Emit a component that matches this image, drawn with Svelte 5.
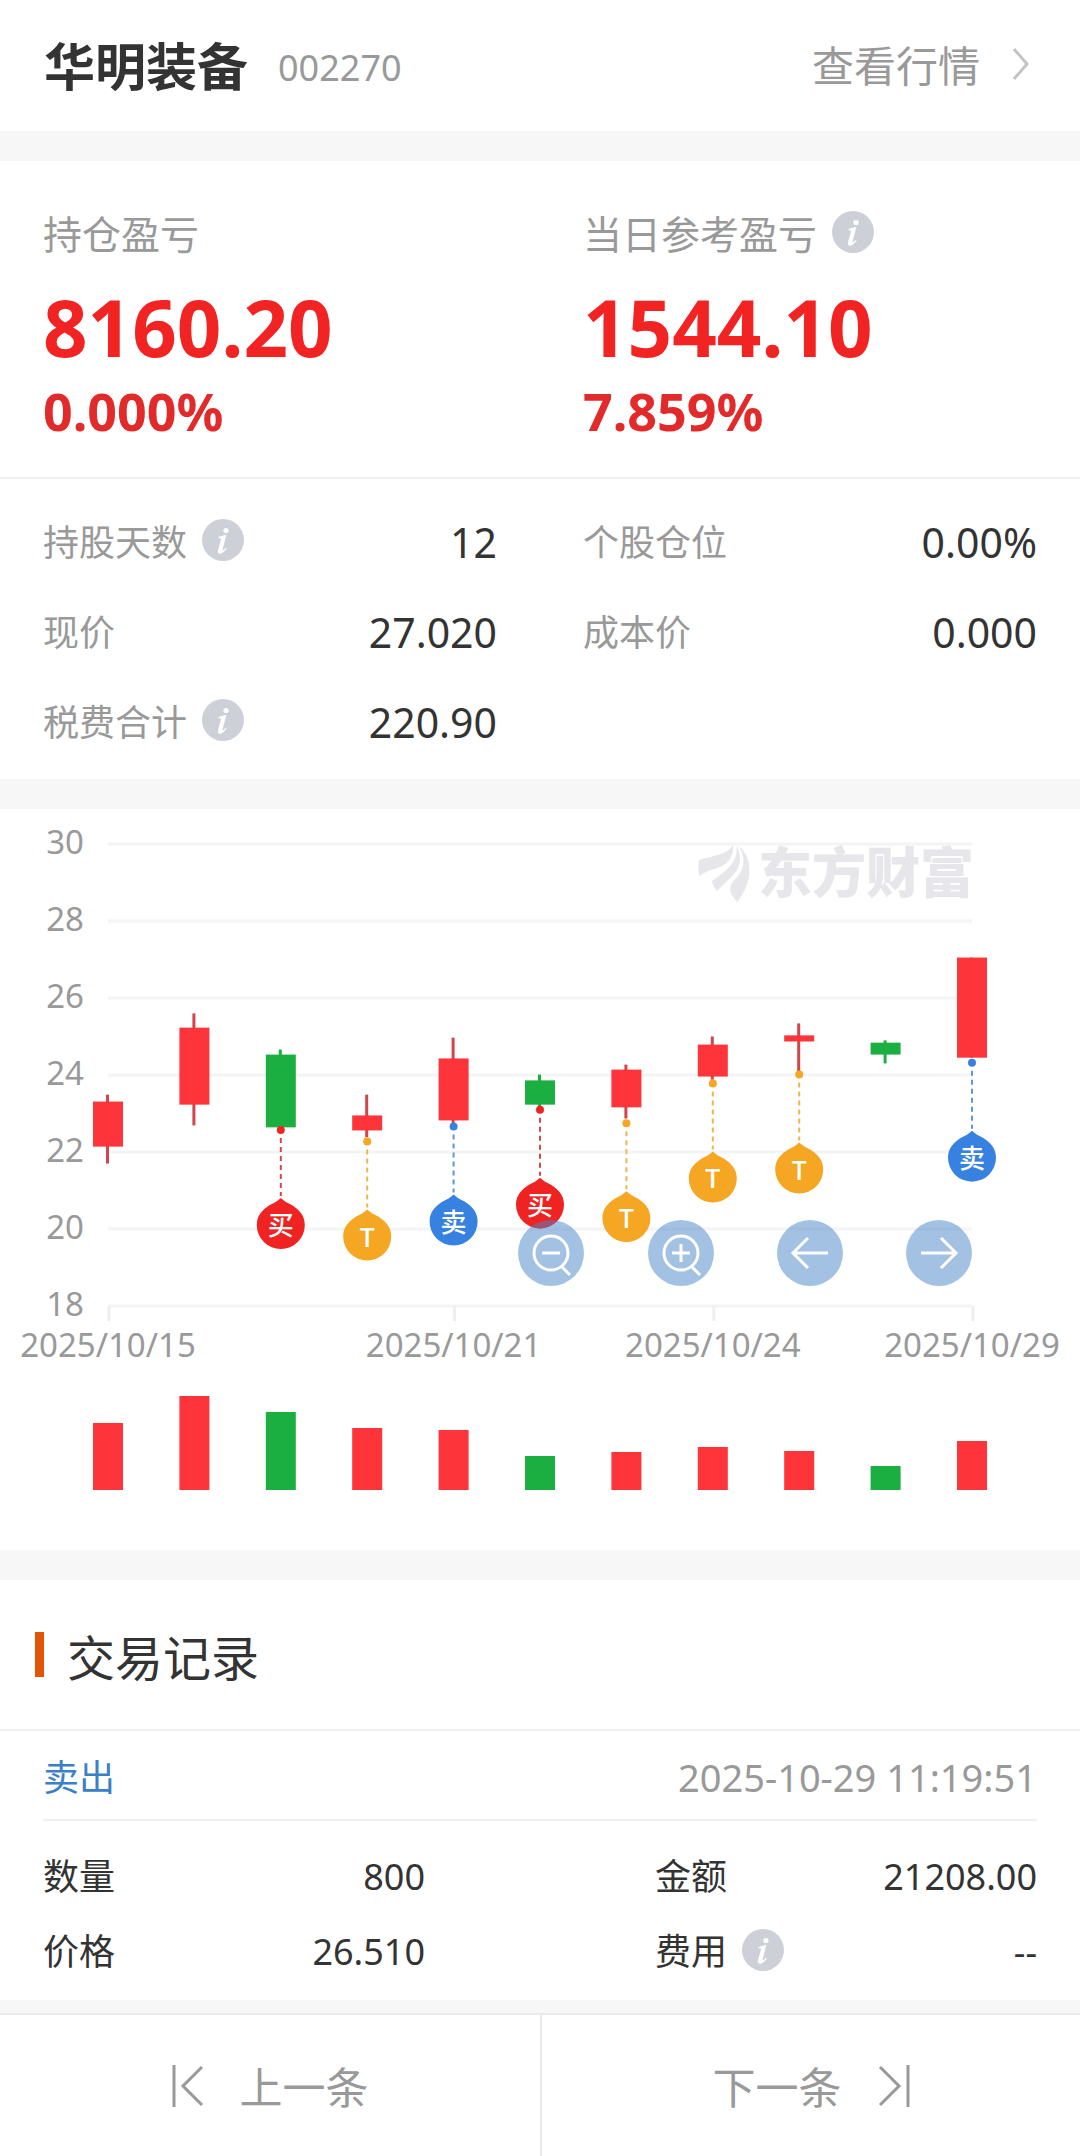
<script>
	const stock = { name: '华明装备', code: '002270' };

	const profits = [
		{ label: '持仓盈亏', amount: '8160.20', percent: '0.000%' },
		{ label: '当日参考盈亏', amount: '1544.10', percent: '7.859%', info: true }
	];

	const details = [
		{ label: '持股天数', value: '12', info: true },
		{ label: '个股仓位', value: '0.00%' },
		{ label: '现价', value: '27.020' },
		{ label: '成本价', value: '0.000' },
		{ label: '税费合计', value: '220.90', info: true }
	];

	const record = [
		{ label: '数量', value: '800' },
		{ label: '金额', value: '21208.00' },
		{ label: '价格', value: '26.510' },
		{ label: '费用', value: '--', info: true }
	];

	// top / bottom are the candle body, high / low the wick
	const candles = [
		{ up: true, top: 23.31, bottom: 22.14, high: 23.49, low: 21.7, volume: 67, date: '2025/10/15' },
		{ up: true, top: 25.23, bottom: 23.23, high: 25.6, low: 22.69, volume: 94 },
		{ up: false, top: 24.53, bottom: 22.64, high: 24.66, low: 22.64, volume: 78, mark: 'buy', at: 22.57 },
		{ up: true, top: 22.95, bottom: 22.56, high: 23.49, low: 22.38, volume: 62, mark: 't', at: 22.27 },
		{ up: true, top: 24.43, bottom: 22.82, high: 24.97, low: 22.74, volume: 60, mark: 'sell', at: 22.66, date: '2025/10/21' },
		{ up: false, top: 23.86, bottom: 23.23, high: 24.01, low: 23.18, volume: 34, mark: 'buy', at: 23.1 },
		{ up: true, top: 24.14, bottom: 23.16, high: 24.27, low: 22.87, volume: 38, mark: 't', at: 22.75 },
		{ up: true, top: 24.79, bottom: 23.96, high: 25, low: 23.88, volume: 43, mark: 't', at: 23.78, date: '2025/10/24' },
		{ up: true, top: 25.03, bottom: 24.87, high: 25.34, low: 24.09, volume: 39, mark: 't', at: 24.01 },
		{ up: false, top: 24.84, bottom: 24.53, high: 24.9, low: 24.3, volume: 24 },
		{ up: true, top: 27.05, bottom: 24.45, high: 27.05, low: 24.45, volume: 49, mark: 'sell', at: 24.32, date: '2025/10/29' }
	];

	const marks = { buy: '买', sell: '卖', t: 'T' };
	const levels = [30, 28, 26, 24, 22, 20, 18];

	const left = 108;
	const right = 972;
	const volumeBase = 681;

	function px(i) {
		return left + ((right - left) / (candles.length - 1)) * i;
	}

	function py(price) {
		return 35 + (30 - price) * 38.5;
	}
</script>

{#snippet infoIcon()}
	<button class="info" aria-label="说明">
		<svg viewBox="0 0 42 42" width="42" height="42">
			<circle cx="21" cy="21" r="21" fill="#cdd0d6" />
			<circle cx="24" cy="11.500" r="2.600" fill="#fff" />
			<path
				d="M16.500 18 C19.500 17 22 16.300 24.300 16 L20.600 30.500 C20.200 32 21.500 31.500 23.800 28.800 L24.600 29.600 C22 33.500 19.500 35 17.600 34.800 C15.700 34.500 15.600 32.800 16.200 30.500 L18.800 21 C19.300 19.200 18.500 19 16.500 19.200 Z"
				fill="#fff"
			/>
		</svg>
	</button>
{/snippet}

<main class="page">
	<header class="header">
		<h1>{stock.name}</h1>
		<span class="code">{stock.code}</span>
		<a class="quote" href="#quote">
			查看行情
			<svg viewBox="0 0 18 34" width="18" height="34">
				<path d="M2 2 L15 17 L2 32" fill="none" stroke="#c4c4c4" stroke-width="3" />
			</svg>
		</a>
	</header>

	<section class="profits columns">
		{#each profits as item}
			<div>
				<div class="profit-label">
					{item.label}
					{#if item.info}{@render infoIcon()}{/if}
				</div>
				<div class="amount">{item.amount}</div>
				<div class="percent">{item.percent}</div>
			</div>
		{/each}
	</section>

	<section class="details columns">
		{#each details as item}
			<div class="row">
				<span class="label">{item.label}</span>
				{#if item.info}{@render infoIcon()}{/if}
				<span class="value">{item.value}</span>
			</div>
		{/each}
	</section>

	<section class="chart">
		<svg class="plot" viewBox="0 0 1080 741">
			{#each levels as level}
				<line class="grid" x1={left} x2={right} y1={py(level)} y2={py(level)} />
				<text class="axis" x="84" y={py(level) + 10} text-anchor="end">{level}</text>
			{/each}

			<!-- watermark -->
			<g class="watermark">
				<g transform="translate(690 29) scale(0.333)">
					<path d="M27 66 C65 54 105 54 130 22 C132 62 108 84 76 92 C56 97 42 103 28 114 C25 98 24 82 27 66 Z" />
					<path d="M140 24 C144 72 115 94 66 130 C68 140 74 150 82 160 C112 122 152 104 150 62 C149 46 146 34 140 24 Z" />
					<path d="M146 24 C170 60 162 100 136 124 C118 142 112 160 142 192 C166 158 180 130 178 92 C177 60 164 38 146 24 Z" />
				</g>
				<text x="974" y="84" text-anchor="end">东方财富</text>
			</g>

			{#each candles as candle, i}
				{#if candle.date}
					<line class="tick" x1={px(i) + 1} x2={px(i) + 1} y1={py(18)} y2={py(18) + 15} />
					<text class="axis" x={px(i)} y="548" text-anchor="middle">{candle.date}</text>
				{/if}
				<g class={candle.up ? 'up' : 'down'}>
					<rect x={px(i) - 2} y={py(candle.high)} width="3" height={py(candle.low) - py(candle.high)} class="wick" />
					<rect x={px(i) - 15} y={py(candle.top)} width="30" height={py(candle.bottom) - py(candle.top)} />
					<rect x={px(i) - 15} y={volumeBase - candle.volume} width="30" height={candle.volume} />
				</g>
			{/each}

			{#each candles as candle, i}
				{#if candle.mark}
					<g class="mark {candle.mark}" transform="translate({px(i)} {py(candle.at)})">
						<circle r="4" />
						<line y1="8" y2="66" />
						<path d="M0 68 C3 71 7 73 11 75 C19 80 24 86 24 95 A24 24 0 0 1 -24 95 C-24 86 -19 80 -11 75 C-7 73 -3 71 0 68 Z" />
						<text y="105" text-anchor="middle">{marks[candle.mark]}</text>
					</g>
				{/if}
			{/each}
		</svg>

		<div class="tools">
			<button aria-label="缩小">
				<svg viewBox="0 0 66 66">
					<circle cx="33" cy="33" r="17" />
					<path d="M24 33 H42 M43 46 L52 55" />
				</svg>
			</button>
			<button aria-label="放大">
				<svg viewBox="0 0 66 66">
					<circle cx="33" cy="33" r="17" />
					<path d="M24 33 H42 M33 24 V42 M43 46 L52 55" />
				</svg>
			</button>
			<button aria-label="向左">
				<svg viewBox="0 0 66 66"><path d="M51 33 H16 M31 18 L16 33 L31 48" /></svg>
			</button>
			<button aria-label="向右">
				<svg viewBox="0 0 66 66"><path d="M15 33 H50 M35 18 L50 33 L35 48" /></svg>
			</button>
		</div>
	</section>

	<section class="records">
		<h2>交易记录</h2>
		<div class="record">
			<div class="record-head">
				<span class="side">卖出</span>
				<time>2025-10-29 11:19:51</time>
			</div>
			<div class="record-body">
				{#each record as item}
					<div class="row">
						<span class="label">{item.label}</span>
						{#if item.info}{@render infoIcon()}{/if}
						<span class="value">{item.value}</span>
					</div>
				{/each}
			</div>
		</div>
	</section>

	<nav class="pager">
		<button>
			<svg viewBox="0 0 32 42" width="32" height="42">
				<path d="M2 0 V42 M30 2 L11 21 L30 40" />
			</svg>
			上一条
		</button>
		<button>
			下一条
			<svg viewBox="0 0 32 42" width="32" height="42">
				<path d="M30 0 V42 M2 2 L21 21 L2 40" />
			</svg>
		</button>
	</nav>
</main>

<style>
	:global(body) {
		margin: 0;
		background: #f7f7f7;
	}

	.page {
		font-family: 'Noto Sans', 'Noto Sans CJK SC', sans-serif;
		color: #333;
	}

	button {
		padding: 0;
		border: 0;
		background: none;
		font: inherit;
		color: inherit;
	}

	svg {
		display: block;
	}

	section,
	.header {
		background: #fff;
	}

	.header {
		display: flex;
		align-items: center;
		height: 131px;
		padding: 0 50px 0 44px;
		margin-bottom: 30px;
	}

	h1 {
		margin: 0;
		padding-bottom: 4px;
		font-size: 51px;
		font-weight: 700;
	}

	.code {
		padding-top: 3px;
		margin-left: 30px;
		font-size: 36px;
		color: #999;
	}

	.quote {
		display: flex;
		align-items: center;
		gap: 32px;
		padding-bottom: 4px;
		margin-left: auto;
		font-size: 42px;
		color: #999;
		text-decoration: none;
	}

	.columns {
		display: grid;
		grid-template-columns: 1fr 1fr;
		column-gap: 86px;
		padding-left: 43px;
		padding-right: 43px;
	}

	.profits {
		padding-top: 44px;
		padding-bottom: 36px;
		border-bottom: 2px solid #f0f0f0;
	}

	.profit-label {
		display: flex;
		align-items: center;
		gap: 15px;
		height: 54px;
		font-size: 39px;
		color: #999;
	}

	.amount,
	.percent {
		font-weight: 700;
		color: #f12323;
	}

	.amount {
		margin-top: 26px;
		font-size: 78px;
		line-height: 84px;
	}

	.percent {
		margin-top: 12px;
		font-size: 52px;
		line-height: 60px;
		color: #e32a2a;
	}

	.info {
		flex: none;
	}

	.row {
		display: flex;
		align-items: center;
		gap: 15px;
	}

	.label {
		font-size: 36px;
	}

	.value {
		padding-top: 3px;
		margin-left: auto;
	}

	.details {
		padding-top: 16px;
		padding-bottom: 14px;
		margin-bottom: 30px;
	}

	.details .row {
		height: 90px;
	}

	.details .label {
		color: #999;
	}

	.details .value {
		font-size: 41px;
	}

	.chart {
		position: relative;
		margin-bottom: 30px;
	}

	.plot {
		width: 100%;
	}

	.grid,
	.tick {
		stroke: #f4f4f4;
		stroke-width: 3;
	}

	.tick {
		stroke: #eee;
	}

	.axis {
		font-size: 33px;
		fill: #999;
	}

	.watermark {
		fill: #e6e6eb;
	}

	.watermark text {
		font-family: 'Noto Sans CJK SC', sans-serif;
		font-size: 54px;
		font-weight: 900;
	}

	.up {
		fill: #fd3439;
	}

	.down {
		fill: #1baf42;
	}

	.up .wick {
		fill: #cf474b;
	}

	.mark line {
		stroke-width: 2;
		stroke-dasharray: 5 4;
	}

	.mark text {
		fill: #fff;
		font-family: 'Noto Sans CJK SC', sans-serif;
		font-size: 26px;
		font-weight: 500;
	}

	.buy {
		fill: #f02323;
	}

	.buy line {
		stroke: #d04a4a;
	}

	.sell {
		fill: #3782e0;
	}

	.sell line {
		stroke: #5b97dc;
	}

	.t {
		fill: #f5a623;
	}

	.t line {
		stroke: #efb552;
	}

	.tools {
		position: absolute;
		top: 55.5%;
		left: 48%;
		right: 10%;
		display: flex;
		justify-content: space-between;
	}

	.tools button {
		width: 66px;
		height: 66px;
		border-radius: 50%;
		background: rgba(72, 132, 200, 0.5);
	}

	.tools svg,
	.pager svg {
		fill: none;
		stroke: #fff;
		stroke-width: 3;
	}

	h2 {
		display: flex;
		align-items: center;
		height: 149px;
		margin: 0;
		padding-left: 35px;
		border-bottom: 2px solid #f0f0f0;
		font-size: 48px;
		font-weight: 400;
	}

	h2::before {
		content: '';
		width: 9px;
		height: 45px;
		margin-right: 23px;
		background: #e25508;
	}

	.record {
		padding: 0 43px 13px;
	}

	.record-head {
		display: flex;
		align-items: center;
		justify-content: space-between;
		height: 88px;
		border-bottom: 2px solid #f0f0f0;
	}

	.side {
		font-size: 36px;
		color: #3a7fc8;
	}

	time {
		padding-top: 3px;
		font-size: 38px;
		color: #999;
	}

	.record-body {
		display: grid;
		grid-template-columns: 1fr 1fr;
		column-gap: 230px;
		padding-top: 16px;
		font-size: 36px;
	}

	.record-body .row {
		height: 75px;
	}

	.pager {
		display: grid;
		grid-template-columns: 1fr 1fr;
		margin-top: 13px;
		border-top: 2px solid #eaeaea;
		background: #fff;
	}

	.pager button {
		display: flex;
		align-items: center;
		justify-content: center;
		gap: 36px;
		height: 141px;
		font-size: 43px;
		color: #999;
	}

	.pager button + button {
		border-left: 2px solid #eaeaea;
	}

	.pager svg {
		stroke: #999;
	}
</style>
